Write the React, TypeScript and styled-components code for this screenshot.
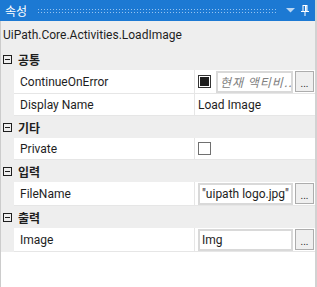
import React from "react";
import styled, { createGlobalStyle } from "styled-components";

const GlobalStyle = createGlobalStyle`
  html, body { margin: 0; padding: 0; background: #ffffff; }
  body {
    font-family: Roboto, "Noto Sans CJK KR", sans-serif;
    font-size: 12px;
    color: #1e1e1e;
  }
`;

const Panel = styled.div`
  width: 317px;
  height: 287px;
  box-sizing: border-box;
  border-right: 2px solid #d2d2d2;
  background: #ffffff;
  display: flex;
  flex-direction: column;
  overflow: hidden;
`;

const TitleBar = styled.div`
  height: 21px;
  flex: none;
  background: #1c79d3;
  display: flex;
  align-items: center;
  padding: 0 6px 0 5px;
  gap: 6px;
`;

const Title = styled.span`
  color: #ffffff;
  font-family: "Noto Sans CJK KR", sans-serif;
  font-size: 12px;
  line-height: 21px;
`;

const Grip = styled.div`
  flex: 1;
  height: 6px;
  margin-left: 4px;
  margin-right: 4px;
  background-image: radial-gradient(circle, rgba(190, 220, 250, 0.75) 0.7px, transparent 0.9px);
  background-size: 3px 3px;
`;

const IconBox = styled.span`
  display: flex;
  align-items: center;
`;

const Body = styled.div`
  flex: 1;
  display: flex;
  flex-direction: column;
  border-left: 1px solid #cccccc;
  min-height: 0;
`;

const Header = styled.div`
  height: 27px;
  flex: none;
  background: #eeeeee;
  display: flex;
  align-items: center;
  padding-left: 2px;
  font-size: 12px;
`;

const Category = styled.div`
  height: 22px;
  flex: none;
  background: #eeeeee;
  display: flex;
  align-items: center;
  gap: 6px;
  padding-left: 2px;
`;

const MinusBox = styled.span`
  width: 7px;
  height: 7px;
  border: 1px solid #1e1e1e;
  position: relative;
  flex: none;
  &::after {
    content: "";
    position: absolute;
    left: 1px;
    right: 1px;
    top: 3px;
    height: 1px;
    background: #1e1e1e;
  }
`;

const CategoryLabel = styled.span`
  font-family: "Noto Sans CJK KR", sans-serif;
  font-weight: 700;
  font-size: 12px;
`;

const Row = styled.div<{ $tall?: boolean }>`
  height: ${(p) => (p.$tall ? 24 : 22)}px;
  flex: none;
  display: grid;
  grid-template-columns: 13px 181px minmax(0, 1fr);
`;

const Indent = styled.div`
  background: #eeeeee;
`;

const NameCell = styled.div`
  display: flex;
  align-items: center;
  padding: 1px 0 0 6px;
  border-right: 1px solid #e6e6e6;
  border-bottom: 1px solid #e6e6e6;
`;

const ValueCell = styled.div`
  display: flex;
  align-items: center;
  gap: 2px;
  padding-left: 3px;
  min-width: 0;
  border-bottom: 1px solid #e6e6e6;
`;

const PlainValue = styled.span`
  padding-top: 1px;
`;

const Check = styled.span<{ $checked?: boolean }>`
  width: 13px;
  height: 13px;
  box-sizing: border-box;
  border: 1px solid ${(p) => (p.$checked ? "#333333" : "#707070")};
  background: #ffffff;
  display: flex;
  align-items: center;
  justify-content: center;
  flex: none;
  margin-right: 3px;
  &::after {
    content: "";
    display: ${(p) => (p.$checked ? "block" : "none")};
    width: 9px;
    height: 9px;
    background: #1e1e1e;
  }
`;

const Input = styled.div<{ $placeholder?: boolean }>`
  flex: 1;
  min-width: 0;
  height: 22px;
  box-sizing: border-box;
  border: 2px solid #d9d9d9;
  display: flex;
  align-items: center;
  padding-left: 2px;
  overflow: hidden;
  white-space: nowrap;
  font-style: ${(p) => (p.$placeholder ? "italic" : "normal")};
  color: ${(p) => (p.$placeholder ? "#808080" : "#1e1e1e")};
  font-family: ${(p) =>
    p.$placeholder ? `"Noto Sans CJK KR", sans-serif` : `Roboto, sans-serif`};
  font-size: 12px;
  letter-spacing: ${(p) => (p.$placeholder ? "1px" : "0")};
`;

const DotsButton = styled.div`
  width: 19px;
  height: 21px;
  box-sizing: border-box;
  border: 1px solid #adadad;
  background: #efefef;
  display: flex;
  align-items: flex-end;
  justify-content: center;
  font-size: 10px;
  line-height: 14px;
  flex: none;
  margin-right: 1px;
  color: #1e1e1e;
`;

const Filler = styled.div`
  flex: 1;
  background: #ffffff;
`;

const PinIcon = () => (
  <svg width="8" height="11" viewBox="0 0 8 11">
    <rect x="2" y="0.5" width="4" height="6" fill="none" stroke="#ffffff" strokeWidth="1" />
    <rect x="4" y="1" width="1.5" height="5" fill="#ffffff" />
    <rect x="0" y="6" width="8" height="1" fill="#ffffff" />
    <rect x="3.5" y="7" width="1" height="4" fill="#ffffff" />
  </svg>
);

const DropIcon = () => (
  <svg width="9" height="5" viewBox="0 0 9 5">
    <path d="M0 0 H9 L4.5 4.5 Z" fill="#b9d6f2" />
  </svg>
);

type Prop = {
  name: string;
  value: React.ReactNode;
  tall?: boolean;
};

const Section = ({ label, props }: { label: string; props: Prop[] }) => (
  <>
    <Category>
      <MinusBox />
      <CategoryLabel>{label}</CategoryLabel>
    </Category>
    {props.map((p) => (
      <Row key={p.name} $tall={p.tall}>
        <Indent />
        <NameCell>{p.name}</NameCell>
        <ValueCell>{p.value}</ValueCell>
      </Row>
    ))}
  </>
);

export default function App() {
  return (
    <>
      <GlobalStyle />
      <Panel>
        <TitleBar>
          <Title>속성</Title>
          <Grip />
          <IconBox>
            <DropIcon />
          </IconBox>
          <IconBox>
            <PinIcon />
          </IconBox>
        </TitleBar>
        <Body>
          <Header>UiPath.Core.Activities.LoadImage</Header>
          <Section
            label="공통"
            props={[
              {
                name: "ContinueOnError",
                tall: true,
                value: (
                  <>
                    <Check $checked />
                    <Input $placeholder>현재 액티비...</Input>
                    <DotsButton>...</DotsButton>
                  </>
                ),
              },
              { name: "Display Name", value: <PlainValue>Load Image</PlainValue> },
            ]}
          />
          <Section label="기타" props={[{ name: "Private", value: <Check /> }]} />
          <Section
            label="입력"
            props={[
              {
                name: "FileName",
                tall: true,
                value: (
                  <>
                    <Input>"uipath logo.jpg"</Input>
                    <DotsButton>...</DotsButton>
                  </>
                ),
              },
            ]}
          />
          <Section
            label="출력"
            props={[
              {
                name: "Image",
                tall: true,
                value: (
                  <>
                    <Input>Img</Input>
                    <DotsButton>...</DotsButton>
                  </>
                ),
              },
            ]}
          />
          <Filler />
        </Body>
      </Panel>
    </>
  );
}
